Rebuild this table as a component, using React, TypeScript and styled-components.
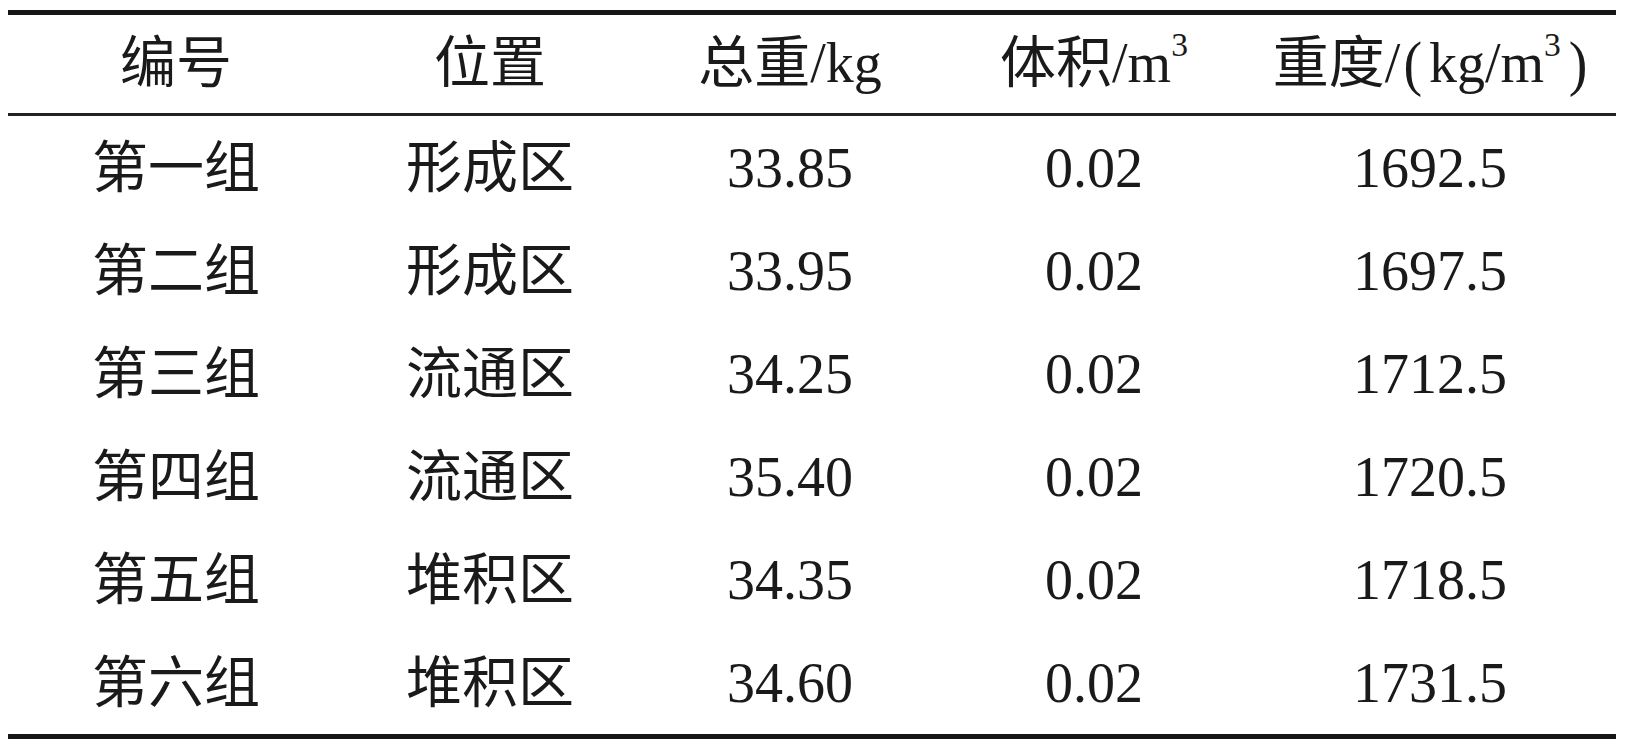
import React from "react";
import styled, { createGlobalStyle } from "styled-components";

const GlobalStyle = createGlobalStyle`
  html, body {
    margin: 0;
    padding: 0;
    background: #ffffff;
  }
  body {
    font-family: "Liberation Serif", "Noto Sans CJK SC", serif;
    color: #1a1a1a;
  }
`;

const Page = styled.div`
  padding: 10px 9px 0 8px;
  width: 1608px;
`;

const Table = styled.div`
  display: grid;
  grid-template-columns: 336px 292px 308px 300px 1fr;
  border-top: 5px solid #161616;
  border-bottom: 5px solid #161616;
  font-family: "Liberation Serif", "Noto Sans CJK SC", serif;
  font-size: 56px;
  color: #1a1a1a;
`;

const HeadCell = styled.div`
  height: 101px;
  display: flex;
  align-items: center;
  justify-content: center;
  border-bottom: 3px solid #222222;
  white-space: nowrap;
  line-height: 1;
  padding-bottom: 2px;
  box-sizing: border-box;
`;

const Cell = styled.div`
  height: 103px;
  display: flex;
  align-items: center;
  justify-content: center;
  white-space: nowrap;
  line-height: 1;
`;

const Sup = styled.sup`
  font-size: 0.6em;
  vertical-align: 0;
  position: relative;
  top: -0.55em;
  line-height: 0;
`;

const Paren = styled.span<{ $side: "open" | "close" }>`
  font-family: "Liberation Serif", serif;
  font-weight: 400;
  transform: scaleY(1.1);
  display: inline-block;
  margin: ${(p) => (p.$side === "open" ? "0 0.12em 0 0.06em" : "0 0 0 0.14em")};
`;

const rows: [string, string, string, string, string][] = [
  ["第一组", "形成区", "33.85", "0.02", "1692.5"],
  ["第二组", "形成区", "33.95", "0.02", "1697.5"],
  ["第三组", "流通区", "34.25", "0.02", "1712.5"],
  ["第四组", "流通区", "35.40", "0.02", "1720.5"],
  ["第五组", "堆积区", "34.35", "0.02", "1718.5"],
  ["第六组", "堆积区", "34.60", "0.02", "1731.5"],
];

export default function App() {
  return (
    <>
      <GlobalStyle />
      <Page>
        <Table>
          <HeadCell>编号</HeadCell>
          <HeadCell>位置</HeadCell>
          <HeadCell>总重/kg</HeadCell>
          <HeadCell>
            体积/m<Sup>3</Sup>
          </HeadCell>
          <HeadCell>
            重度/<Paren $side="open">(</Paren>kg/m<Sup>3</Sup>
            <Paren $side="close">)</Paren>
          </HeadCell>
          {rows.map((r, i) =>
            r.map((v, j) => <Cell key={`${i}-${j}`}>{v}</Cell>)
          )}
        </Table>
      </Page>
    </>
  );
}
